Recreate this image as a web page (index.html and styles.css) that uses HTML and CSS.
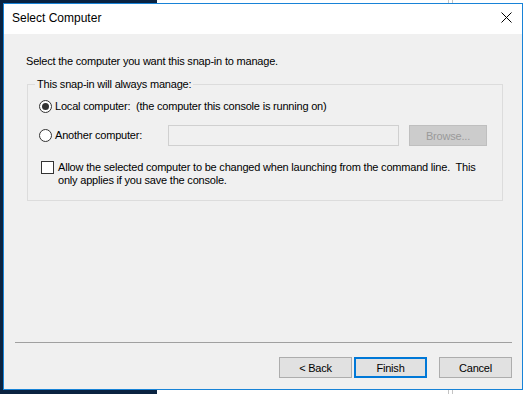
FILE: index.html
```html
<!DOCTYPE html>
<html lang="en">
<head>
  <meta charset="UTF-8" />
  <title>Select Computer</title>
  <link rel="stylesheet" href="styles.css">
</head>
<body>

  <div class="dialog">
    <div class="titlebar">
      <span class="title">Select Computer</span>
      <svg class="close" width="11" height="11" viewBox="0 0 11 11">
        <path d="M0.5 0.5 L10.5 10.5 M10.5 0.5 L0.5 10.5" stroke="#000" stroke-width="1" fill="none"/>
      </svg>
    </div>

    <div class="content">
      <div class="intro">Select the computer you want this snap-in to manage.</div>

      <fieldset class="group">
        <legend>This snap-in will always manage:</legend>

        <div class="row row-local">
          <span class="radio checked"></span>
          <span class="label">Local computer:&nbsp; (the computer this console is running on)</span>
        </div>

        <div class="row row-other">
          <span class="radio"></span>
          <span class="label label-other">Another computer:</span>
          <input type="text" class="computer-input" disabled>
          <button class="btn btn-disabled" disabled>Browse...</button>
        </div>

        <div class="row row-check">
          <span class="checkbox"></span>
          <span class="label">Allow the selected computer to be changed when launching from the command line.&nbsp; This<br>only applies if you save the console.</span>
        </div>
      </fieldset>

      <div class="spacer"></div>
      <div class="separator"></div>

      <div class="buttons">
        <button class="btn">&lt; Back</button>
        <button class="btn btn-default">Finish</button>
        <button class="btn btn-cancel">Cancel</button>
      </div>
    </div>
  </div>

</body>
</html>
```

FILE: styles.css
```css
html, body {
  height: 100%;
}

body {
  margin: 0;
  font-family: "Liberation Sans", Arial, sans-serif;
  font-size: 11px;
  letter-spacing: -0.2px;
  color: #000;
  background:
    linear-gradient(to right, transparent 448px, #c4c4c4 448px, #c4c4c4 449px, transparent 449px, transparent 452px, #c4c4c4 452px, #c4c4c4 453px, transparent 453px),
    linear-gradient(to right, #0a2341 157px, #ffffff 157px);
  overflow: hidden;
}

.dialog {
  box-sizing: border-box;
  width: 520px;
  height: 387px;
  margin: 3px 0 0 3px;
  border: 1px solid #1883d7;
  background: #f0f0f0;
  display: flex;
  flex-direction: column;
}

.titlebar {
  height: 30px;
  background: #fff;
  display: flex;
  align-items: center;
  justify-content: space-between;
  padding: 0 10px 0 8px;
  flex-shrink: 0;
}

.title {
  font-size: 12px;
  letter-spacing: 0;
  line-height: 28px;
  padding-bottom: 2px;
}

.close {
  display: block;
  margin-top: -3px;
}

.content {
  flex-grow: 1;
  display: flex;
  flex-direction: column;
  padding-top: 21px;
}

.intro {
  line-height: 13px;
  margin-left: 22px;
}

.group {
  margin: 10px 19px 0 23px;
  padding: 9px 0 13px 11px;
  border: 1px solid #dcdcdc;
  min-inline-size: 0;
}

.group legend {
  margin-left: -4px;
  padding: 0 2px;
  line-height: 13px;
}

.row {
  display: flex;
  align-items: center;
}

.label {
  line-height: 13px;
  margin-left: 3px;
}

.row-local {
  align-items: flex-start;
}

.row-other {
  margin-top: 12px;
}

.label-other {
  width: 113px;
}

.row-check {
  margin-top: 15px;
  margin-left: 2px;
  align-items: flex-start;
}

.row-check .label {
  margin-left: 4px;
  white-space: nowrap;
}

.radio {
  box-sizing: border-box;
  width: 13px;
  height: 13px;
  border: 1px solid #333;
  border-radius: 50%;
  background: #fff;
  display: flex;
  align-items: center;
  justify-content: center;
  flex-shrink: 0;
}

.radio.checked::after {
  content: "";
  width: 7px;
  height: 7px;
  border-radius: 50%;
  background: #333;
}

.checkbox {
  box-sizing: border-box;
  width: 13px;
  height: 13px;
  border: 1px solid #333;
  background: #fff;
  flex-shrink: 0;
}

.computer-input {
  box-sizing: border-box;
  width: 231px;
  height: 21px;
  margin: 0;
  border: 1px solid #d0d0d0;
  background: #f0f0f0;
  padding: 0 3px;
}

.btn {
  box-sizing: border-box;
  width: 73px;
  height: 21px;
  margin: 0;
  padding: 0;
  font-family: "Liberation Sans", Arial, sans-serif;
  font-size: 11px;
  letter-spacing: -0.2px;
  color: #000;
  background: #e1e1e1;
  border: 1px solid #adadad;
}

.btn-disabled {
  width: 78px;
  margin-left: 10px;
  background: #cccccc;
  border-color: #bfbfbf;
  color: #9a9a9a;
}

.btn-default {
  border: 2px solid #0078d7;
  margin-left: 2px;
}

.btn-cancel {
  margin-left: 12px;
}

.spacer {
  flex-grow: 1;
}

.separator {
  height: 1px;
  background: #a0a0a0;
  margin: 0 10px 0 11px;
}

.buttons {
  display: flex;
  justify-content: flex-end;
  margin: 14px 10px 11px 0;
}
```
